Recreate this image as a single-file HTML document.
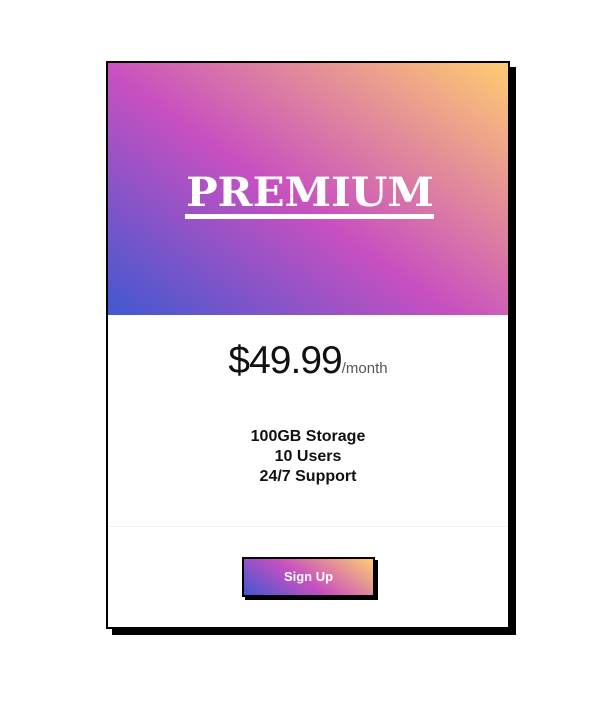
<!DOCTYPE html>
<html><head><style>
body{margin:0;background:#fff;font-family:"Liberation Sans",sans-serif;}
.card{position:absolute;left:106px;top:61px;width:400px;height:564px;border:2px solid #000;background:#fff;box-shadow:6px 6px 0 #000;}
.hdr{position:absolute;left:0;top:0;width:400px;height:252px;background:linear-gradient(35deg,#4158D0 0%,#C850C0 46%,#FFCC70 100%);}
.title{position:absolute;left:77px;top:110px;width:249px;height:50px;color:#fff;font-family:"DejaVu Serif","Liberation Serif",serif;font-weight:bold;font-size:40px;line-height:40px;text-align:center;white-space:nowrap;}
.title span{display:inline-block;transform:scale(1.05,1.0);}
.ul{position:absolute;left:77px;top:151px;width:249px;height:5px;background:#fff;}
.price{position:absolute;left:0;top:276px;width:400px;text-align:center;font-size:39px;color:#111;letter-spacing:-1px;}
.price small{font-size:15px;color:#555;letter-spacing:0;}
.feat{position:absolute;left:0;top:364px;width:400px;text-align:center;font-weight:bold;font-size:16px;line-height:20px;color:#111;}
.div{position:absolute;left:0;top:463px;width:400px;height:1px;background:#eceff3;}
.btn{position:absolute;left:134px;top:494px;width:129px;height:36px;border:2px solid #000;box-shadow:3px 3px 0 #000;background:linear-gradient(35deg,#4158D0 0%,#C850C0 46%,#FFCC70 100%);color:#fff;font-weight:bold;font-size:13px;text-align:center;line-height:36px;}
</style></head><body>
<div class="card">
<div class="hdr"><div class="title"><span>PREMIUM</span></div><div class="ul"></div></div>
<div class="price">$49.99<small>/month</small></div>
<div class="feat">100GB Storage<br>10 Users<br>24/7 Support</div>
<div class="div"></div>
<div class="btn">Sign Up</div>
</div>
</body></html>
